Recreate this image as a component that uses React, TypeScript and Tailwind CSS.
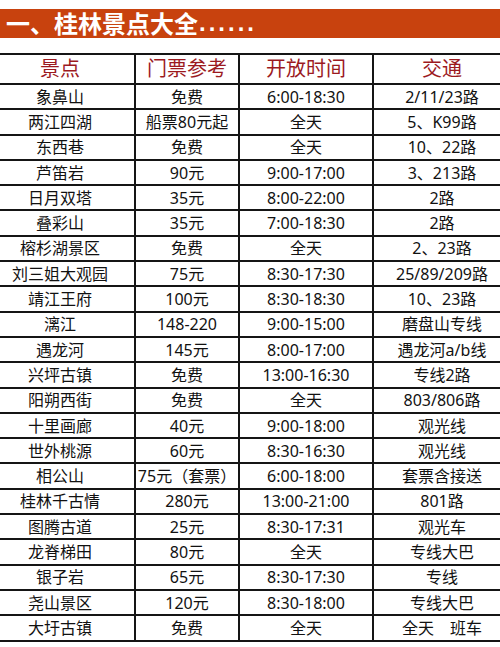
const rows: [string, string, string, string][] = [
  ['象鼻山', '免费', '6:00-18:30', '2/11/23路'],
  ['两江四湖', '船票80元起', '全天', '5、K99路'],
  ['东西巷', '免费', '全天', '10、22路'],
  ['芦笛岩', '90元', '9:00-17:00', '3、213路'],
  ['日月双塔', '35元', '8:00-22:00', '2路'],
  ['叠彩山', '35元', '7:00-18:30', '2路'],
  ['榕杉湖景区', '免费', '全天', '2、23路'],
  ['刘三姐大观园', '75元', '8:30-17:30', '25/89/209路'],
  ['靖江王府', '100元', '8:30-18:30', '10、23路'],
  ['漓江', '148-220', '9:00-15:00', '磨盘山专线'],
  ['遇龙河', '145元', '8:00-17:00', '遇龙河a/b线'],
  ['兴坪古镇', '免费', '13:00-16:30', '专线2路'],
  ['阳朔西街', '免费', '全天', '803/806路'],
  ['十里画廊', '40元', '9:00-18:00', '观光线'],
  ['世外桃源', '60元', '8:30-16:30', '观光线'],
  ['相公山', '75元（套票）', '6:00-18:00', '套票含接送'],
  ['桂林千古情', '280元', '13:00-21:00', '801路'],
  ['图腾古道', '25元', '8:30-17:31', '观光车'],
  ['龙脊梯田', '80元', '全天', '专线大巴'],
  ['银子岩', '65元', '8:30-17:30', '专线'],
  ['尧山景区', '120元', '8:30-18:00', '专线大巴'],
  ['大圩古镇', '免费', '全天', '全天　班车'],
]

function Row({ cells, head }: { cells: [string, string, string, string]; head?: boolean }) {
  return (
    <div
      className={`flex border-b-2 border-[#151515] ${
        head ? 'h-[30px] text-[20px] text-[#9c1a1f]' : 'h-[25.3px] text-[16px] text-[#111]'
      }`}
    >
      <div className="w-[136px] flex items-center justify-center pr-[14px] border-r-2 border-[#151515]">{cells[0]}</div>
      <div className="w-[104px] flex items-center justify-center border-r-2 border-[#151515] whitespace-nowrap">{cells[1]}</div>
      <div className="w-[134px] flex items-center justify-center border-r-2 border-[#151515]">{cells[2]}</div>
      <div className="flex-1 flex items-center justify-center pl-[10px] whitespace-nowrap">{cells[3]}</div>
    </div>
  )
}

export default function App() {
  return (
    <div
      className="w-[500px] h-[647px] bg-white overflow-hidden pt-[9px] leading-none"
      style={{ fontFamily: '"Noto Sans", "Noto Sans CJK SC", sans-serif' }}
    >
      {/* Title bar */}
      <div className="h-[29px] bg-[#c8420e] flex items-center pl-[6px] text-white text-[24px] font-bold">
        一、桂林景点大全
        <span className="ml-[1px] tracking-[3px] self-end pb-[3px]" style={{ fontFamily: '"Liberation Sans", sans-serif' }}>
          ......
        </span>
      </div>

      {/* Table */}
      <div className="mt-[15px] border-t-2 border-[#151515]">
        <Row head cells={['景点', '门票参考', '开放时间', '交通']} />
        {rows.map((r) => (
          <Row key={r[0]} cells={r} />
        ))}
      </div>
    </div>
  )
}
